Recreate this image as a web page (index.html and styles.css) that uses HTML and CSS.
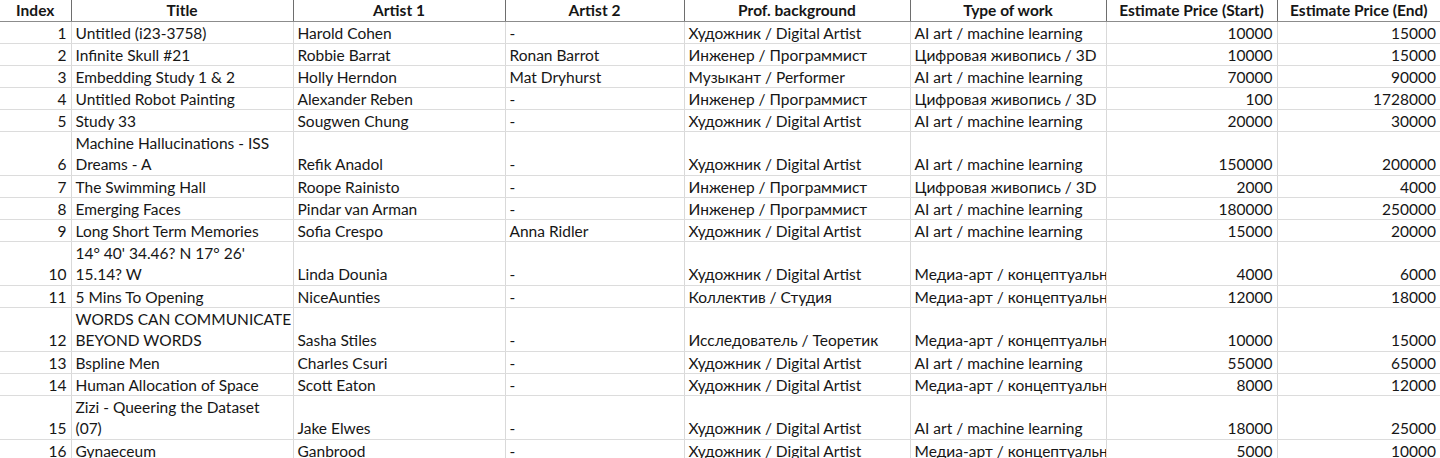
FILE: index.html
```html
<!DOCTYPE html>
<html>
<head>
<meta charset="utf-8">
<link rel="stylesheet" href="styles.css">
</head>
<body>
<table class="sheet">
<colgroup>
<col class="c-idx"><col class="c-title"><col class="c-a1"><col class="c-a2"><col class="c-prof"><col class="c-type"><col class="c-start"><col class="c-end">
</colgroup>
<thead>
<tr><th>Index</th><th>Title</th><th>Artist 1</th><th>Artist 2</th><th>Prof. background</th><th>Type of work</th><th>Estimate Price (Start)</th><th>Estimate Price (End)</th></tr>
</thead>
<tbody>
<tr><td class="num">1</td><td>Untitled (i23-3758)</td><td>Harold Cohen</td><td>-</td><td>Художник / Digital Artist</td><td>AI art / machine learning</td><td class="num">10000</td><td class="num">15000</td></tr>
<tr><td class="num">2</td><td>Infinite Skull #21</td><td>Robbie Barrat</td><td>Ronan Barrot</td><td>Инженер / Программист</td><td>Цифровая живопись / 3D</td><td class="num">10000</td><td class="num">15000</td></tr>
<tr><td class="num">3</td><td>Embedding Study 1 &amp; 2</td><td>Holly Herndon</td><td>Mat Dryhurst</td><td>Музыкант / Performer</td><td>AI art / machine learning</td><td class="num">70000</td><td class="num">90000</td></tr>
<tr><td class="num">4</td><td>Untitled Robot Painting</td><td>Alexander Reben</td><td>-</td><td>Инженер / Программист</td><td>Цифровая живопись / 3D</td><td class="num">100</td><td class="num">1728000</td></tr>
<tr><td class="num">5</td><td>Study 33</td><td>Sougwen Chung</td><td>-</td><td>Художник / Digital Artist</td><td>AI art / machine learning</td><td class="num">20000</td><td class="num">30000</td></tr>
<tr class="tall"><td class="num">6</td><td>Machine Hallucinations - ISS<br>Dreams - A</td><td>Refik Anadol</td><td>-</td><td>Художник / Digital Artist</td><td>AI art / machine learning</td><td class="num">150000</td><td class="num">200000</td></tr>
<tr><td class="num">7</td><td>The Swimming Hall</td><td>Roope Rainisto</td><td>-</td><td>Инженер / Программист</td><td>Цифровая живопись / 3D</td><td class="num">2000</td><td class="num">4000</td></tr>
<tr><td class="num">8</td><td>Emerging Faces</td><td>Pindar van Arman</td><td>-</td><td>Инженер / Программист</td><td>AI art / machine learning</td><td class="num">180000</td><td class="num">250000</td></tr>
<tr><td class="num">9</td><td>Long Short Term Memories</td><td>Sofia Crespo</td><td>Anna Ridler</td><td>Художник / Digital Artist</td><td>AI art / machine learning</td><td class="num">15000</td><td class="num">20000</td></tr>
<tr class="tall"><td class="num">10</td><td>14° 40' 34.46? N 17° 26'<br>15.14? W</td><td>Linda Dounia</td><td>-</td><td>Художник / Digital Artist</td><td class="clip">Медиа-арт / концептуальн</td><td class="num">4000</td><td class="num">6000</td></tr>
<tr><td class="num">11</td><td>5 Mins To Opening</td><td>NiceAunties</td><td>-</td><td>Коллектив / Студия</td><td class="clip">Медиа-арт / концептуальн</td><td class="num">12000</td><td class="num">18000</td></tr>
<tr class="tall"><td class="num">12</td><td>WORDS CAN COMMUNICATE<br>BEYOND WORDS</td><td>Sasha Stiles</td><td>-</td><td>Исследователь / Теоретик</td><td class="clip">Медиа-арт / концептуальн</td><td class="num">10000</td><td class="num">15000</td></tr>
<tr><td class="num">13</td><td>Bspline Men</td><td>Charles Csuri</td><td>-</td><td>Художник / Digital Artist</td><td>AI art / machine learning</td><td class="num">55000</td><td class="num">65000</td></tr>
<tr><td class="num">14</td><td>Human Allocation of Space</td><td>Scott Eaton</td><td>-</td><td>Художник / Digital Artist</td><td class="clip">Медиа-арт / концептуальн</td><td class="num">8000</td><td class="num">12000</td></tr>
<tr class="tall"><td class="num">15</td><td>Zizi - Queering the Dataset<br>(07)</td><td>Jake Elwes</td><td>-</td><td>Художник / Digital Artist</td><td>AI art / machine learning</td><td class="num">18000</td><td class="num">25000</td></tr>
<tr><td class="num">16</td><td>Gynaeceum</td><td>Ganbrood</td><td>-</td><td>Художник / Digital Artist</td><td class="clip">Медиа-арт / концептуальн</td><td class="num">5000</td><td class="num">10000</td></tr>
</tbody>
</table>
</body>
</html>
```
FILE: styles.css
```css
html, body {
  margin: 0;
  padding: 0;
  background: #ffffff;
}
body {
  font-family: Lato, "Open Sans", "Liberation Sans", sans-serif;
  font-size: 15.5px;
  color: #161616;
  overflow: hidden;
}
.sheet {
  border-collapse: collapse;
  table-layout: fixed;
  width: 1440px;
}
.c-idx { width: 71px; }
.c-title { width: 222px; }
.c-a1 { width: 212px; }
.c-a2 { width: 179px; }
.c-prof { width: 226px; }
.c-type { width: 196px; }
.c-start { width: 171px; }
.c-end { width: 163px; }

.sheet th {
  height: 21px;
  padding: 0 3px;
  font-weight: bold;
  font-size: 15.5px;
  text-align: center;
  line-height: 21px;
  white-space: nowrap;
  overflow: hidden;
  border-left: 1px solid #6e6e6e;
  border-bottom: 1px solid #8c8c8c;
  vertical-align: middle;
}
.sheet th:first-child { border-left: none; }
.sheet td {
  height: 20px;
  padding: 1px 4px 0;
  line-height: 20px;
  white-space: nowrap;
  overflow: hidden;
  vertical-align: bottom;
  border-left: 1px solid #d9d9d9;
  border-bottom: 1px solid #dcdcdc;
}
.sheet td:first-child { border-left: none; }
.sheet tr.tall td { height: 42px; line-height: 21px; }
.sheet td.num { text-align: right; }
.sheet td.clip { text-overflow: clip; }
```
